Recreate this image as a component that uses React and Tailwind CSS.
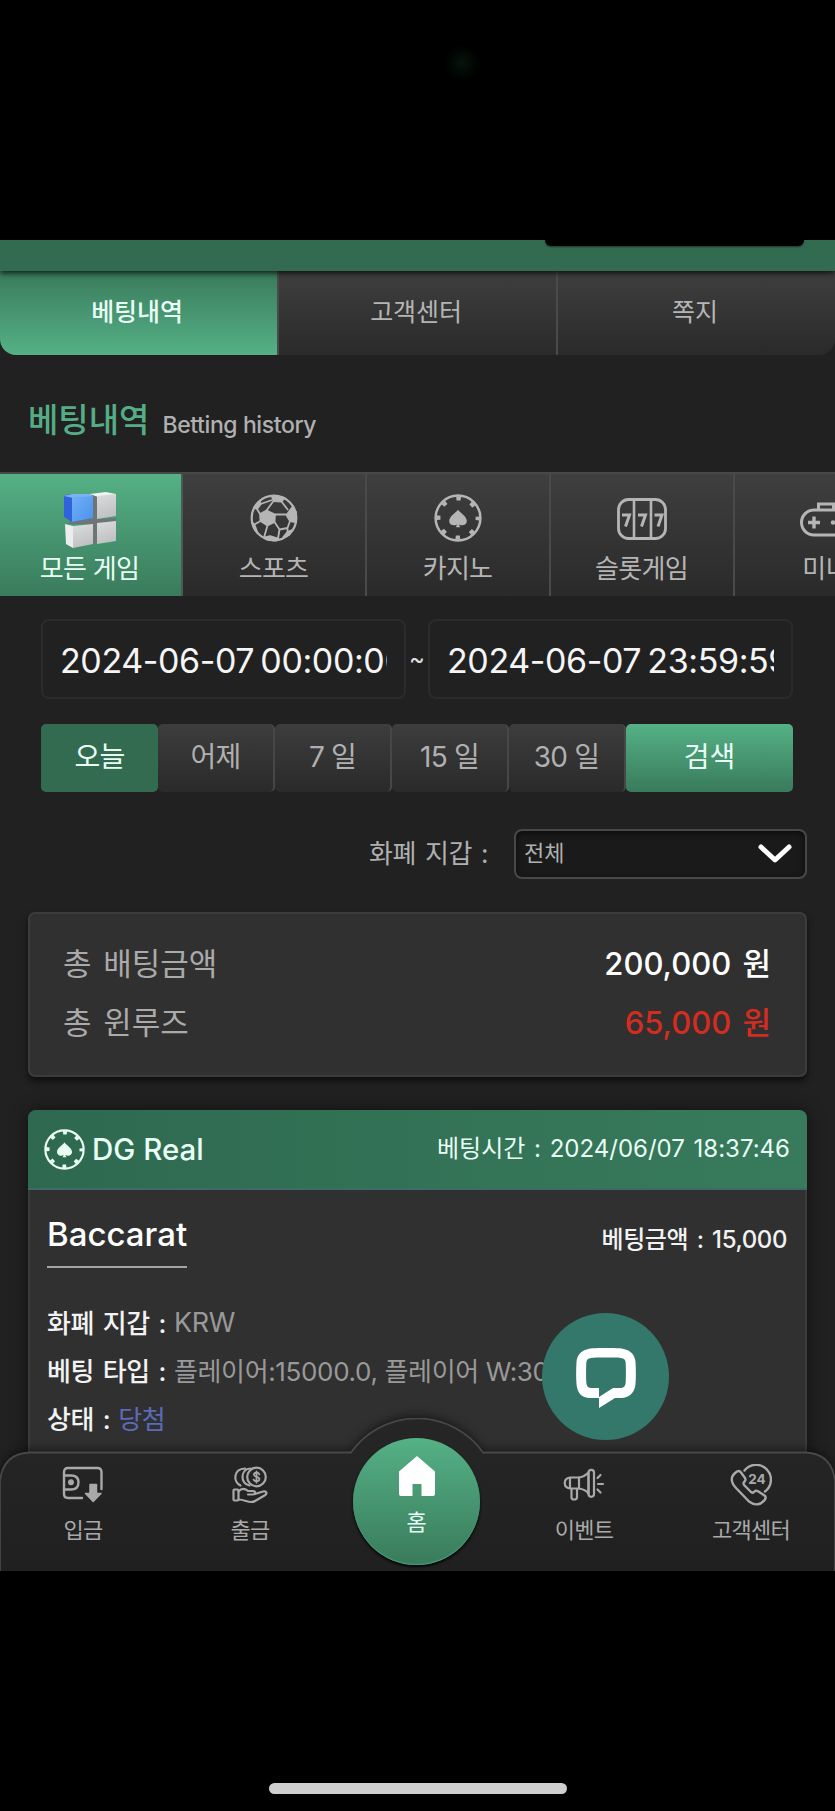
import { clsx } from 'clsx';

const tabs = ['베팅내역', '고객센터', '쪽지'];
const periods = ['오늘', '어제', '7 일', '15 일', '30 일'];

function CubesIcon() {
  return (
    <svg width="56" height="58" viewBox="0 0 56 58" className="block">
      <defs>
        <linearGradient id="cubeBlue" x1="0" y1="0" x2="1" y2="1">
          <stop offset="0" stopColor="#6fb0f7" />
          <stop offset="1" stopColor="#4a92ec" />
        </linearGradient>
        <linearGradient id="cubeGray" x1="0" y1="0" x2="0.3" y2="1">
          <stop offset="0" stopColor="#dcdddd" />
          <stop offset="1" stopColor="#bfc1c2" />
        </linearGradient>
      </defs>
      <path d="M27 4L36 5V28L54 27V31L35 34V51L31 53V33L4 33L10 30L31 27Z" fill="#6d7577" />
      <path d="M2 5L8 3H30V27L10 31L2 26Z" fill="#2f62dc" />
      <path d="M2 5L10 3H30V6L11 7Z" fill="#7db1f0" />
      <path d="M10 7L31 5V27L10 31Z" fill="url(#cubeBlue)" />
      <path d="M28 3L44 1L54 3V6L36 6Z" fill="#f1f2f2" />
      <path d="M35 5L54 3V25L35 28Z" fill="url(#cubeGray)" />
      <path d="M3 33L11 35V57L4 53Z" fill="#eceded" />
      <path d="M11 35L31 33V53L11 57Z" fill="url(#cubeGray)" />
      <path d="M35 32L54 30V50L35 53Z" fill="url(#cubeGray)" />
    </svg>
  );
}

function SoccerIcon() {
  return (
    <svg width="48" height="48" viewBox="0 0 48 48" fill="none" stroke="currentColor" strokeWidth="1.8" strokeLinejoin="round" className="block">
      <circle cx="24" cy="24" r="22.3" strokeWidth="2.2" />
      <g fill="currentColor">
        <path d="M10 20L16.5 16.5L25 20.5L24.5 28L17.5 31.5L10.5 27Z" />
        <path d="M22 2.5L34.5 4L31.5 7.5L23.5 7Z" />
        <path d="M38 19L42.5 13L46 18L45.5 28L40 27L37 22Z" />
        <path d="M14 43.5L20 42L28 44.5L26 46.5L17 45.5Z" />
        <path d="M4 13.5L10 6.5L10.5 10.5L7 15Z" />
        <path d="M2 28L5 32L7.5 39L4 34Z" />
        <path d="M33 43.5L37.5 38L42 36L39 41Z" />
      </g>
      <path d="M16.5 16.5L23.5 7M25 20.5L38 20.5M24.5 28L29.5 35.5L28 44.5M17.5 31.5L14 43.5M10.5 27L3.5 31M10 20L7 15M31.5 7.5L38 16M29.5 35.5L37.5 34L40 27M37.5 34V38M10.5 10L22 6" />
    </svg>
  );
}

function ChipIcon({ size }) {
  return (
    <svg width={size} height={size} viewBox="0 0 48 48" fill="none" stroke="currentColor" className="block shrink-0">
      <circle cx="24" cy="24" r="22.4" strokeWidth="2.5" />
      <circle cx="24" cy="24" r="19.6" strokeWidth="4" strokeDasharray="4.6 10.793" strokeDashoffset="2.3" />
      <path
        d="M24 15.5c-1.2 3-8.8 6.3-8.8 11.5 0 4.2 4.8 5.3 7.7 3.4-.2 1.2-.5 2-1.2 2.8h4.6c-.7-.8-1-1.6-1.2-2.8 2.9 1.9 7.7.8 7.7-3.4 0-5.2-7.6-8.5-8.8-11.5z"
        fill="currentColor"
        stroke="none"
      />
    </svg>
  );
}

function SlotIcon() {
  return (
    <svg width="50" height="42" viewBox="0 0 50 42" fill="none" stroke="currentColor" className="block">
      <rect x="1.5" y="1.5" width="47" height="39" rx="10" strokeWidth="2.8" />
      <path d="M17 2V40M34 2V40" strokeWidth="2.6" />
      <path d="M5 17H12.5L8.5 28.5M21 17H28.5L24.5 28.5M37.5 17H45L41 28.5" strokeWidth="3" />
    </svg>
  );
}

function GamepadIcon() {
  return (
    <svg width="52" height="36" viewBox="0 0 52 36" fill="none" stroke="currentColor" strokeWidth="3" className="block">
      <path d="M18.5 8V2H33.5V8" />
      <rect x="1.5" y="8" width="49" height="25" rx="12.5" />
      <path d="M8 20.5H20M14 14.5V26.5" strokeWidth="3.4" />
      <circle cx="33" cy="20.5" r="1.5" fill="currentColor" strokeWidth="1.5" />
      <circle cx="41" cy="20.5" r="1.5" fill="currentColor" strokeWidth="1.5" />
    </svg>
  );
}

function DepositIcon() {
  return (
    <svg width="42" height="38" viewBox="0 0 42 38" fill="none" stroke="currentColor" strokeWidth="2.4" strokeLinecap="round" strokeLinejoin="round" className="block">
      <path d="M39.5 23V6Q39.5 2 35.5 2H6Q2 2 2 6V28Q2 32 6 32H20" />
      <path d="M2 9.5H9Q16.5 9.5 16.5 16.3Q16.5 23.5 9 23.5H2" />
      <circle cx="9" cy="16.3" r="2.2" fill="currentColor" strokeWidth="1.5" />
      <path d="M28 18.5H34.5V27.5H39L31.2 35.5L23.5 27.5H28Z" fill="currentColor" strokeWidth="1.5" />
    </svg>
  );
}

function WithdrawIcon() {
  return (
    <svg width="36" height="38" viewBox="0 0 36 38" fill="none" stroke="currentColor" strokeWidth="2.2" strokeLinecap="round" strokeLinejoin="round" className="block">
      <circle cx="24.5" cy="11" r="9.3" />
      <path d="M18.5 2.5C8 3 8 18 17.5 19.5M13 2.5C1 3 1 16 8.5 19.5" />
      <path d="M27.3 8.3C26.3 6 21.7 6.2 21.9 8.8C22 11.5 27.4 10 27.4 13C27.4 15.8 22.5 16 21.6 13.6M24.5 5.3V16.7" strokeWidth="1.8" />
      <rect x="1.5" y="23.5" width="5" height="11" rx="1" />
      <path d="M6.5 25.5C10 21.5 13 22.5 16 25H21C24 25.2 23.5 28.5 21 28.5H16M23 28L31 25.5C35 24.5 35.5 28 32.5 29.5L23 35C20 37 17 36 14 35C11 34 9.5 33.5 6.5 33.5" />
    </svg>
  );
}

function MegaphoneIcon() {
  return (
    <svg width="42" height="34" viewBox="0 0 42 34" fill="none" stroke="currentColor" strokeWidth="2.2" strokeLinecap="round" strokeLinejoin="round" className="block">
      <path d="M7 9.5H16V20.5H7ZM7 9.5C0 10.5 0 19.5 7 20.5M8.5 20.5V29.5Q8.5 31.5 11 31.5Q14 31.5 14 29.5V20.5" />
      <path d="M16 9.5C20 9 23.5 6.5 25.5 4.5V25.5C23.5 23 20 21 16 20.5" />
      <rect x="25.5" y="1.8" width="5.5" height="27" rx="2.7" />
      <path d="M35 16H40M34.5 10L37.5 7M34.5 21.5L37.5 24.5" />
    </svg>
  );
}

function Support24Icon() {
  return (
    <svg width="42" height="42" viewBox="0 0 42 42" fill="none" stroke="currentColor" strokeWidth="2.4" strokeLinecap="round" strokeLinejoin="round" className="block">
      <path d="M14.5 6.5A14.8 14.8 0 1 1 35 27.5" />
      <path d="M5 9L7.5 7.3Q9.5 6.5 11 8.5L15 14Q16.2 16 14.5 17.5Q12.5 19 14.5 21.5L21 28Q23 29.5 24.5 27.5Q26 26 28 27.3L34.5 31.5Q36.5 33 35 35.5C31 41 25 42 19 37.5L6.5 24.5C0.5 18.5 0.5 13 5 9Z" />
      <text x="27" y="20.3" textAnchor="middle" fontFamily="Inter, sans-serif" fontSize="13.5" fontWeight="700" fill="currentColor" stroke="none">24</text>
    </svg>
  );
}

const games = [
  { name: '모든 게임', icon: <CubesIcon />, box: 'mb-[5px]' },
  { name: '스포츠', icon: <SoccerIcon />, box: 'mb-[12px]' },
  { name: '카지노', icon: <ChipIcon size={48} />, box: 'mb-[12px]' },
  { name: '슬롯게임', icon: <SlotIcon />, box: 'mb-[14px]' },
  { name: '미니', icon: <GamepadIcon />, box: 'mb-[16px]' },
];

function Game({ game, active }) {
  return (
    <button
      className={clsx(
        'flex h-[122px] shrink-0 flex-col items-center justify-end border-r-2 pb-[12px] text-[26px] leading-[30px] tracking-[-0.7px]',
        active
          ? 'w-[183px] border-[#4b5a53] bg-linear-to-b from-[#55b186] to-[#397b5c] pr-[2px] text-[#e9fff6]'
          : 'w-[184px] border-[#4a4a4a] bg-linear-to-b from-[#3f3f3f] to-[#2a2a2a] pr-[1px] text-[#b5b5b5]'
      )}
    >
      <span className={game.box}>{game.icon}</span>
      {game.name}
    </button>
  );
}

function DateField({ value }) {
  return (
    <div className="h-[80px] w-[365px] rounded-[8px] border-2 border-[#2b2b2b] px-[17px]">
      <div className="overflow-hidden pt-[2px] text-[34px] leading-[76px] tracking-[-0.4px] whitespace-nowrap text-[#f5f5f5] [word-spacing:-3px]">{value}</div>
    </div>
  );
}

function InfoRow({ label, children }) {
  return (
    <div className="flex h-[48px] items-center text-[26px] whitespace-nowrap">
      <span className="font-medium tracking-[-0.5px] text-[#f2f2f2] [word-spacing:2.5px]">{label} :</span>
      <span className="ml-[8px] tracking-[-0.35px]">{children}</span>
    </div>
  );
}

function NavItem({ icon, label }) {
  return (
    <button className="flex w-[167px] flex-col items-center pr-[1px] text-[#a9a9a9]">
      <span className="flex h-[42px] items-center">{icon}</span>
      <span className="mt-[9px] text-[22px] leading-[30px] tracking-[-0.7px]">{label}</span>
    </button>
  );
}

export default function App() {
  return (
    <div className="relative h-[1811px] w-[835px] overflow-hidden bg-black font-['Inter','Noto_Sans_CJK_KR',sans-serif]">
      {/* Camera indicator */}
      <div className="absolute top-[45px] left-[444px] size-[36px] rounded-full bg-[radial-gradient(circle,#06140a_0%,#000_70%)]"></div>

      <div className="relative mt-[240px] h-[1331px] overflow-hidden bg-[#212121]">
        <header className="relative z-10 h-[31px] bg-[#336b51] shadow-[0_2px_6px_rgba(0,0,0,0.8)]">
          <div className="ml-[545px] h-[6px] w-[259px] rounded-b-[8px] bg-black shadow-[0_1px_2px_rgba(0,0,0,0.5)]"></div>
        </header>

        <div className="flex h-[84px] overflow-hidden rounded-b-[16px]">
          {tabs.map((tab, i) => (
            <button
              key={tab}
              className={clsx(
                'h-full pb-[1px] text-[25px] tracking-[-0.1px]',
                i === 0
                  ? 'w-[277px] bg-linear-to-b from-[#397b5c] to-[#55b186] pr-[3px] font-medium text-[#e9fff6]'
                  : 'flex-1 border-l-2 border-[#4a4a4a] bg-linear-to-b from-[#3f3f3f] to-[#2a2a2a] pr-[3px] text-[#b5b5b5]'
              )}
            >
              {tab}
            </button>
          ))}
        </div>

        <div className="flex h-[117px] items-baseline pt-[41px] pl-[28px]">
          <h1 className="text-[33px] leading-[48px] font-medium text-[#55ad86]">베팅내역</h1>
          <span className="relative top-[1px] ml-[13px] text-[23px] font-medium tracking-[-0.4px] text-[#b0b0b0]">Betting history</span>
        </div>

        <div className="flex h-[124px] w-[920px] border-t-2 border-[#484848]">
          {games.map((game, i) => (
            <Game key={game.name} game={game} active={i === 0} />
          ))}
        </div>

        <div className="mt-[23px] flex items-center pl-[41px]">
          <DateField value="2024-06-07 00:00:00" />
          <span className="w-[22px] text-center text-[24px] text-[#ddd]">~</span>
          <DateField value="2024-06-07 23:59:59" />
        </div>

        <div className="mt-[25px] flex h-[68px] pr-[42px] pl-[41px] text-[28px] leading-[60px]">
          {periods.map((period, i) => (
            <button
              key={period}
              className={clsx(
                'w-[117px] rounded-[5px] pb-[3px] tracking-[-0.8px]',
                i === 0
                  ? 'bg-[#336b51] text-[#e9fff6]'
                  : 'border-r-2 border-[#474747] bg-linear-to-b from-[#3d3d3d] to-[#2a2a2a] text-[#b0b0b0]'
              )}
            >
              {period}
            </button>
          ))}
          <button className="flex-1 rounded-[5px] bg-linear-to-b from-[#55b186] to-[#397b5c] pb-[3px] text-[#e9fff6]">검색</button>
        </div>

        <div className="mt-[37px] flex items-center justify-end pr-[28px]">
          <span className="mr-[26px] pb-[2px] text-[26px] tracking-[-0.4px] text-[#b0b0b0] [word-spacing:2px]">화폐 지갑 :</span>
          <div className="flex h-[50px] w-[293px] items-center justify-between rounded-[8px] border-2 border-[#484848] bg-[#1a1a1a] pr-[12px] pl-[8px] shadow-[inset_0_2px_6px_rgba(0,0,0,0.6)]">
            <span className="pb-[1px] text-[22px] text-[#b0b0b0]">전체</span>
            <svg width="36" height="24" viewBox="0 0 36 24" fill="none" stroke="#fff" strokeWidth="5" strokeLinecap="round" strokeLinejoin="round">
              <path d="M4 5L18 18L32 5" />
            </svg>
          </div>
        </div>

        <div className="mx-[28px] mt-[33px] flex h-[165px] flex-col rounded-[7px] border-2 border-[#3c3c3e] bg-[#303030] pt-[21px] pr-[34px] pl-[33px] shadow-[0_4px_6px_rgba(0,0,0,0.6)] [word-spacing:3px]">
          <div className="flex h-[59px] items-center justify-between">
            <span className="text-[31px] text-[#aaa]">총 배팅금액</span>
            <span className="text-[31px] font-medium text-white">200,000 원</span>
          </div>
          <div className="flex h-[59px] items-center justify-between">
            <span className="text-[31px] text-[#aaa]">총 윈루즈</span>
            <span className="text-[31px] font-medium text-[#d42c20]">65,000 원</span>
          </div>
        </div>

        <div className="mx-[28px] mt-[33px] h-[400px] rounded-t-[8px] bg-[#303030] shadow-[0_0_16px_rgba(0,0,0,0.5)]">
          <div className="flex h-[80px] items-center rounded-t-[8px] border-b-2 border-[#3d6a6a] bg-linear-to-r from-[#2e694f] to-[#387b5c] pr-[17px] pl-[16px] text-[#e9fff6]">
            <ChipIcon size={41} />
            <span className="ml-[7px] text-[29.5px] font-medium">DG Real</span>
            <span className="ml-auto text-[24px] [word-spacing:2px]">베팅시간 : 2024/06/07 18:37:46</span>
          </div>
          <div className="h-[320px] border-x-2 border-[#3a3b3e] pr-[18px] pl-[17px]">
            <div className="flex justify-between pt-[18px]">
              <h2 className="h-[60px] border-b-2 border-[#a5a5a5] pt-[2px] text-[33px] leading-[48px] font-medium text-white">Baccarat</h2>
              <span className="pt-[12px] text-[24px] leading-[40px] font-medium tracking-[-0.4px] text-[#f2f2f2] [word-spacing:2.5px]">베팅금액 : 15,000</span>
            </div>
            <div className="mt-[31px] text-[#999]">
              <InfoRow label="화폐 지갑">
                <span className="text-[27px]">KRW</span>
              </InfoRow>
              <InfoRow label="베팅 타입">플레이어:15000.0, 플레이어 W:30000.0</InfoRow>
              <InfoRow label="상태">
                <span className="text-[#5b6bb8]">당첨</span>
              </InfoRow>
            </div>
          </div>
        </div>

        {/* Live chat button */}
        <button className="absolute top-[1073px] left-[542px] flex size-[127px] items-center justify-center rounded-full bg-[#33786b] pt-[3px]">
          <svg width="60" height="60" viewBox="0 0 60 60" fill="#fff">
            <path
              fillRule="evenodd"
              d="M30 0C42 0 47 .3 51 2C56 4 59 8 59.5 14C60 22 60 30 59.5 36C59 43 55 48 49 49.5C46 50.2 44 50 39 50L23 60V50C16 50 13 50.2 10 49.5C4 48 1 43 .5 36C0 30 0 22 .5 14C1 8 4 4 9 2C13 .3 18 0 30 0ZM30 9.5C21 9.5 17 9.5 14 10.2C11.5 10.8 10.5 12 10.3 15C10 22 10 28 10.3 34C10.5 38 12 39.8 15 40H23V49L37 40H45C48 39.8 49.5 38 49.7 34C50 28 50 22 49.7 15C49.5 12 48.5 10.8 46 10.2C43 9.5 39 9.5 30 9.5Z"
            />
          </svg>
        </button>

        {/* Bottom navigation */}
        <nav className="absolute inset-x-0 bottom-0 h-[153px]">
          <svg width="835" height="153" viewBox="0 0 835 153" className="absolute inset-0 drop-shadow-[0_-2px_4px_rgba(0,0,0,0.5)]">
            <defs>
              <linearGradient id="navFill" x1="0" y1="0" x2="0" y2="1">
                <stop offset="0" stopColor="#262626" />
                <stop offset="1" stopColor="#202020" />
              </linearGradient>
            </defs>
            <path d="M0 156V63Q3 36 29 34.5H351A81 81 0 0 1 483 34.5H806Q832 36 835 63V156Z" fill="url(#navFill)" stroke="#484848" strokeWidth="1.8" />
          </svg>
          <div className="relative flex pt-[46px]">
            <NavItem icon={<DepositIcon />} label="입금" />
            <NavItem icon={<WithdrawIcon />} label="출금" />
            <div className="w-[167px]"></div>
            <NavItem icon={<MegaphoneIcon />} label="이벤트" />
            <NavItem icon={<Support24Icon />} label="고객센터" />
          </div>
          <button className="absolute top-[20px] left-[353px] flex size-[127px] flex-col items-center rounded-full bg-linear-to-b from-[#55b186] to-[#397b5c] pt-[17px] text-[#e9fff6] shadow-[0_2px_3px_rgba(0,0,0,0.9),inset_0_-1px_1px_#45a07c]">
            <svg width="38" height="42" viewBox="0 0 38 42" fill="#fff">
              <path d="M19 1L37 16.5V39Q37 41 35 41H23.5V29H14.5V41H3Q1 41 1 39V16.5Z" />
            </svg>
            <span className="mt-[10px] text-[22px] leading-[30px]">홈</span>
          </button>
        </nav>
      </div>

      {/* Home indicator */}
      <div className="mx-auto mt-[212px] h-[11px] w-[298px] rounded-full bg-[#cfcfcf]"></div>
    </div>
  );
}
